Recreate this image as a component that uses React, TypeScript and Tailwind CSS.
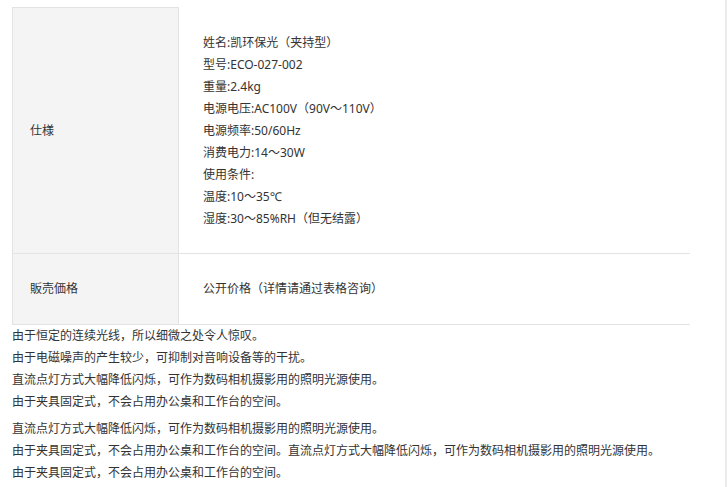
import React from "react";

const specLines = [
  "姓名:凯环保光（夹持型）",
  "型号:ECO-027-002",
  "重量:2.4kg",
  "电源电压:AC100V（90V～110V）",
  "电源频率:50/60Hz",
  "消费电力:14〜30W",
  "使用条件:",
  "温度:10〜35℃",
  "湿度:30～85%RH（但无结露）",
];

const block1 = [
  "由于恒定的连续光线，所以细微之处令人惊叹。",
  "由于电磁噪声的产生较少，可抑制对音响设备等的干扰。",
  "直流点灯方式大幅降低闪烁，可作为数码相机摄影用的照明光源使用。",
  "由于夹具固定式，不会占用办公桌和工作台的空间。",
];

const block2 = [
  "直流点灯方式大幅降低闪烁，可作为数码相机摄影用的照明光源使用。",
  "由于夹具固定式，不会占用办公桌和工作台的空间。直流点灯方式大幅降低闪烁，可作为数码相机摄影用的照明光源使用。",
  "由于夹具固定式，不会占用办公桌和工作台的空间。",
];

export default function App() {
  return (
    <div
      className="relative w-[727px] h-[487px] overflow-hidden bg-white text-[12px] leading-[22px] text-[#333333]"
      style={{ fontFamily: '"Noto Sans", "Noto Sans CJK SC", sans-serif' }}
    >
      <div className="ml-[12px] mt-[7px] w-[678px]">
        <div className="flex border-b border-[#e3e3e3]">
          <div className="w-[167px] shrink-0 bg-[#f4f4f4] border-l border-r border-t border-[#e3e3e3] pl-[17px] flex items-center">
            仕様
          </div>
          <div className="flex-1 pl-[24px] pt-[25px] pb-[23px] flex flex-col justify-center">
            {specLines.map((l, i) => (
              <div key={i} className="whitespace-nowrap">{l}</div>
            ))}
          </div>
        </div>
        <div className="flex border-b border-[#e3e3e3]">
          <div className="w-[167px] shrink-0 bg-[#f4f4f4] border-l border-r border-[#e3e3e3] pl-[17px] flex items-center">
            販売価格
          </div>
          <div className="flex-1 pl-[24px] py-[24px] flex items-center">
            公开价格（详情请通过表格咨询）
          </div>
        </div>
        <div>
          {block1.map((l, i) => (
            <div key={i} className="whitespace-nowrap">{l}</div>
          ))}
        </div>
        <div className="mt-[5px]">
          {block2.map((l, i) => (
            <div key={i} className="whitespace-nowrap">{l}</div>
          ))}
        </div>
      </div>
      <div className="absolute top-0 left-[725px] w-[2px] h-full bg-[#ececec]" />
    </div>
  );
}
